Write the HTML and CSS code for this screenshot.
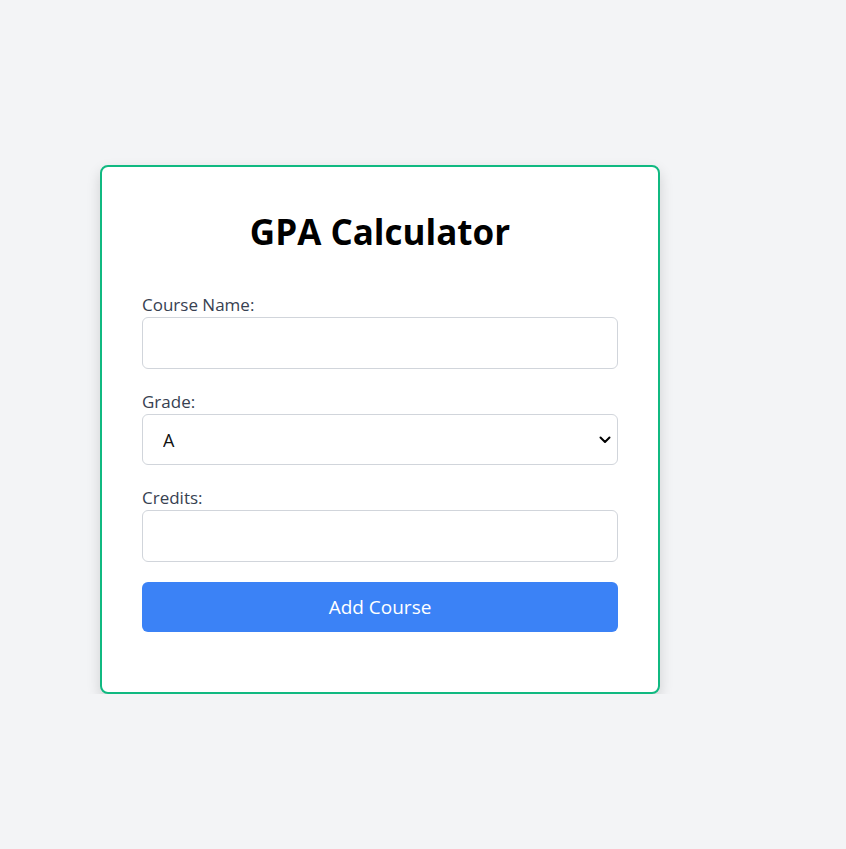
FILE: index.html
```html
<!DOCTYPE html>
<html lang="en">
<head>
    <meta charset="UTF-8">
    <meta name="viewport" content="width=device-width, initial-scale=1.0">
    <title>GPA Calculator</title>
    <link rel="stylesheet" href="styles.css">
</head>
<body>
    <div class="page">
        <div class="card">
            <h1>GPA Calculator</h1>
            <form class="course-form">
                <div class="form-group">
                    <label for="course-name">Course Name:</label>
                    <input type="text" id="course-name">
                </div>
                <div class="form-group">
                    <label for="grade">Grade:</label>
                    <div class="select-wrap">
                        <select id="grade">
                            <option>A</option>
                            <option>B</option>
                            <option>C</option>
                            <option>D</option>
                            <option>F</option>
                        </select>
                        <svg class="chevron" width="12" height="8" viewBox="0 0 12 8" aria-hidden="true">
                            <path d="M1.5 1.5 L6 6 L10.5 1.5" fill="none" stroke="#000" stroke-width="2" stroke-linecap="round" stroke-linejoin="round"/>
                        </svg>
                    </div>
                </div>
                <div class="form-group">
                    <label for="credits">Credits:</label>
                    <input type="number" id="credits">
                </div>
                <button type="button" class="btn">Add Course</button>
            </form>
            <div class="results"></div>
        </div>
    </div>
</body>
</html>
```

FILE: styles.css
```css
:root {
    --bg-color: #f3f4f6; /* Page background */
    --card-border: #10b981; /* Card outline */
    --label-color: #374151; /* Label text */
    --input-border: #d1d5db; /* Field border */
    --btn-color: #3b82f6; /* Button color */
}
body {
    font-family: 'Segoe UI', 'Open Sans', sans-serif;
    background-color: var(--bg-color);
    margin: 0;
    padding: 0;
}
.page {
    padding: 165px 0 0 100px;
}
.card {
    width: 476px;
    background: #fff;
    border: 2px solid var(--card-border);
    border-radius: 8px;
    padding: 40px;
    box-shadow: 0 6px 14px rgba(0, 0, 0, 0.15);
}
h1 {
    margin: 0 0 35px;
    font-size: 35px;
    line-height: 50px;
    font-weight: 700;
    text-align: center;
    color: #000;
}
.form-group {
    margin-bottom: 20px;
}
label {
    display: block;
    font-size: 17px;
    font-weight: 500;
    line-height: 25px;
    color: var(--label-color);
}
input,
select {
    display: block;
    box-sizing: border-box;
    width: 100%;
    height: 52px;
    border: 1px solid var(--input-border);
    border-radius: 6px;
    background: #fff;
    font-family: inherit;
    font-size: 18px;
    color: #111;
    padding: 0 12px;
    margin: 0;
}
.select-wrap {
    position: relative;
}
select {
    height: 51px;
    padding: 0 20px;
    appearance: none;
    -webkit-appearance: none;
}
.chevron {
    position: absolute;
    right: 7px;
    top: 22px;
    pointer-events: none;
}
.btn {
    display: block;
    width: 100%;
    height: 50px;
    border: none;
    border-radius: 6px;
    background: var(--btn-color);
    color: #fff;
    font-family: inherit;
    font-size: 19px;
    cursor: pointer;
}
.results {
    height: 20px;
}
```
